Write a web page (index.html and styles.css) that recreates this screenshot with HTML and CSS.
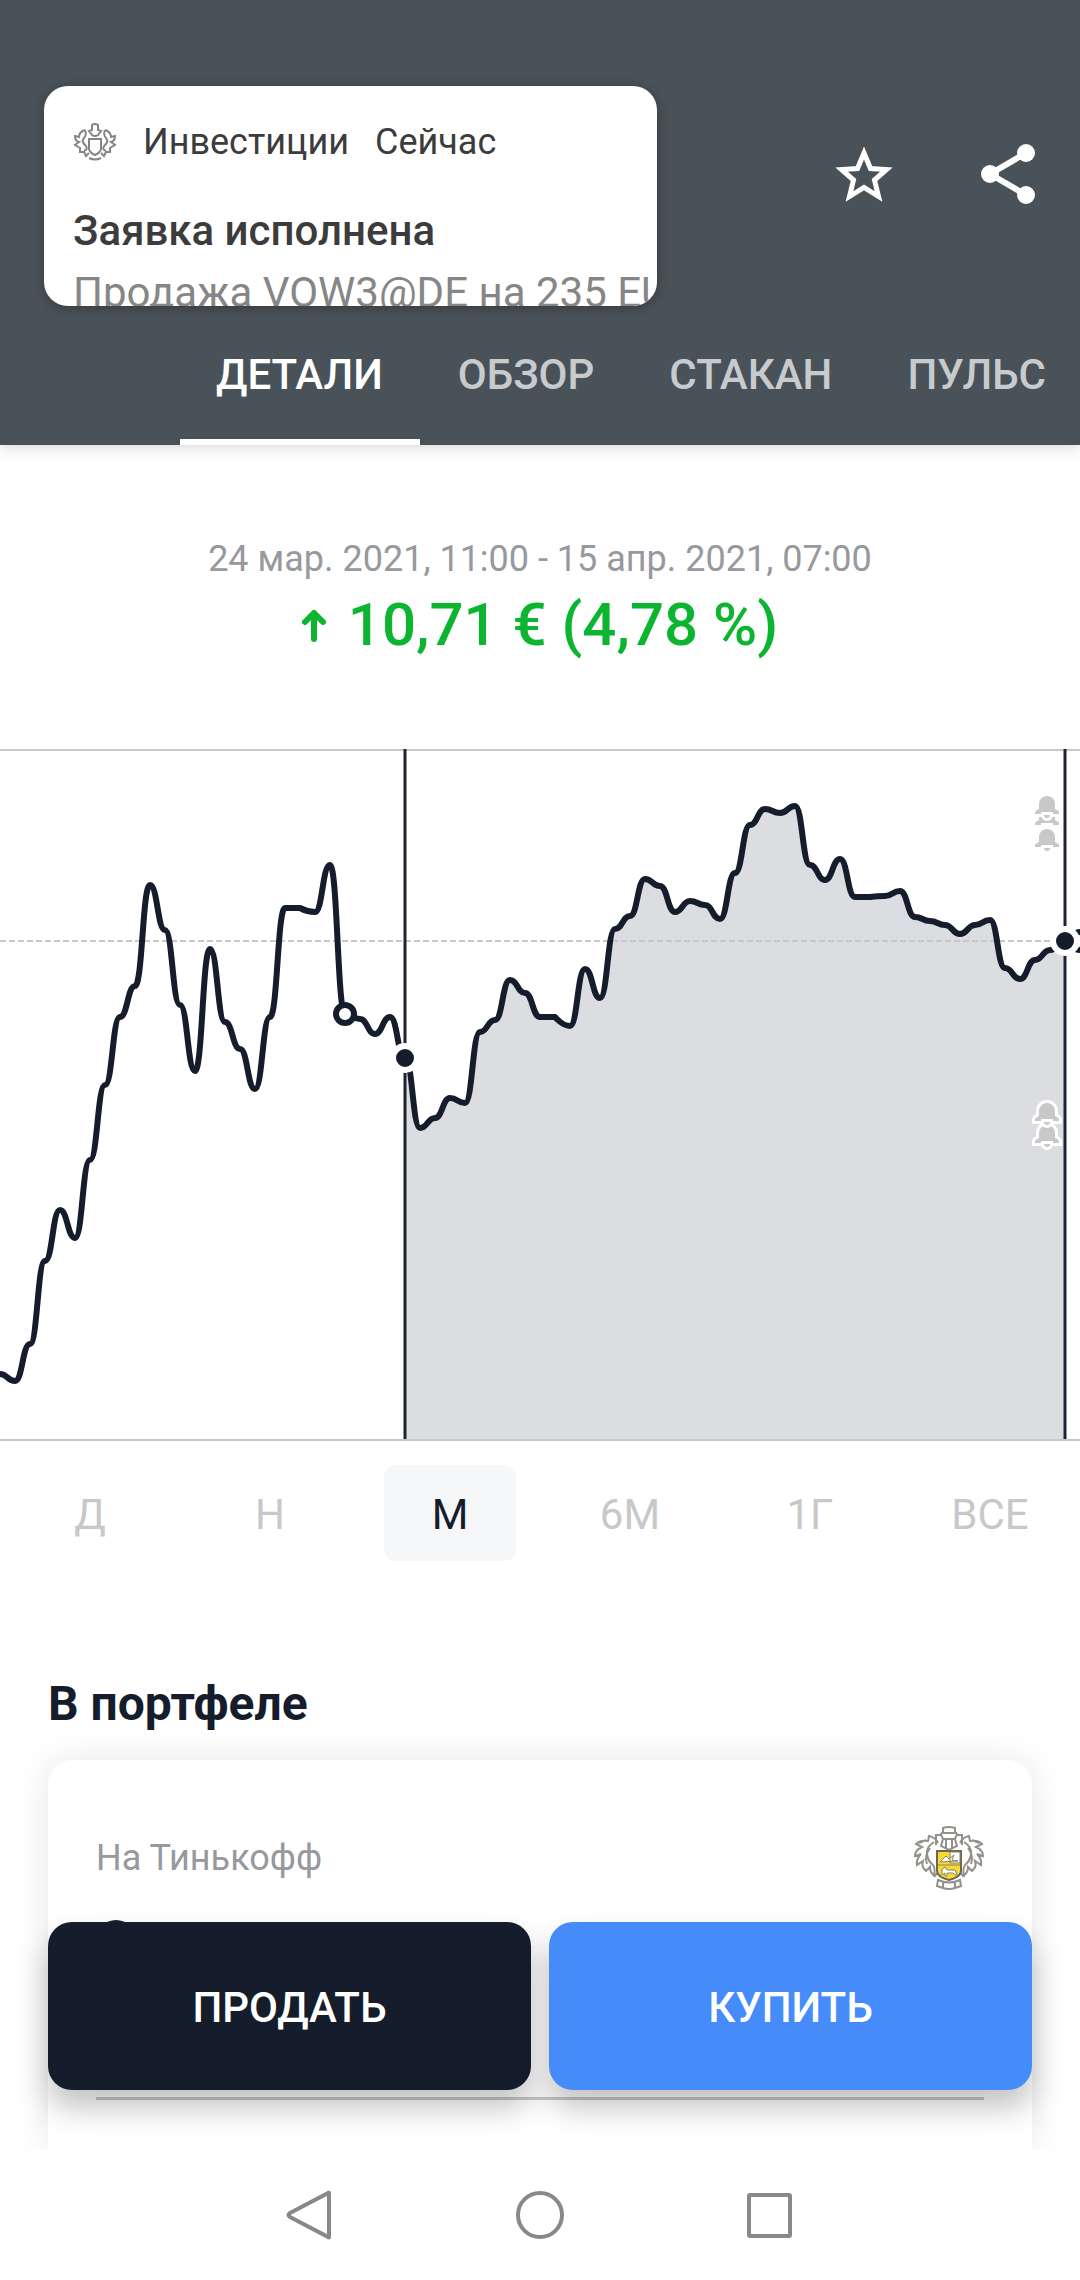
FILE: index.html
```html
<!DOCTYPE html>
<html lang="ru">
<head>
<meta charset="utf-8">
<meta name="viewport" content="width=device-width, initial-scale=1">
<title>Инвестиции</title>
<link rel="stylesheet" href="styles.css">
</head>
<body>
<div class="screen">
  <header class="header">
    <div class="header-top">
      <section class="toast">
        <div class="toast-app">
          <svg class="toast-icon" viewBox="0 0 44 38" aria-hidden="true">
            <path d="M19 2q3-2 6 0v5l3 1-3 4q-3 2-6 0l-3-4 3-1zM16 16h12v10q-1 4-6 6q-5-2-6-6zM12 7q-6 2-6 7l-4-1q0 5 4 6l-4 3 5 3v4l4 0 2 4 3-3M12 7q2 5-1 8t1 7-1 6M32 7q6 2 6 7l4-1q0 5-4 6l4 3-5 3v4l-4 0-2 4-3-3M32 7q-2 5 1 8t-1 7 1 6M16 35q6 3 12 0"/>
          </svg>
          <span>Инвестиции</span>
          <span>Сейчас</span>
        </div>
        <h2 class="toast-title">Заявка исполнена</h2>
        <p class="toast-text">Продажа VOW3@DE на 235 EUR</p>
      </section>
      <div class="header-actions">
        <button class="icon-button" type="button" aria-label="В избранное">
          <svg viewBox="0 0 72 72"><path d="M36 15 42.500 30.500 58.500 31.500 46.500 42 50.500 58.500 36 49.500 21.500 58.500 25.500 42 13.500 31.500 29.500 30.500z" fill="none" stroke="#fff" stroke-width="5"/></svg>
        </button>
        <button class="icon-button" type="button" aria-label="Поделиться">
          <svg viewBox="0 0 72 72"><path d="M54 15 18 36 54 57" fill="none" stroke="#fff" stroke-width="6"/><g fill="#fff"><circle cx="54" cy="15" r="9"/><circle cx="18" cy="36" r="9"/><circle cx="54" cy="57" r="9"/></g></svg>
        </button>
      </div>
    </div>
    <nav class="tabs">
      <a class="tab tab-active" href="#details">ДЕТАЛИ</a>
      <a class="tab" href="#overview">ОБЗОР</a>
      <a class="tab" href="#orderbook">СТАКАН</a>
      <a class="tab" href="#pulse">ПУЛЬС</a>
    </nav>
  </header>

  <main class="content" id="details">
    <section class="summary">
      <p class="summary-range">24 мар. 2021, 11:00 - 15 апр. 2021, 07:00</p>
      <p class="summary-change">
        <svg class="arrow" viewBox="0 0 24 34" aria-hidden="true"><path d="M12 31V5M3 14l9-9 9 9"/></svg>
        <span>10,71 € (4,78 %)</span>
      </p>
    </section>

    <svg class="chart" viewBox="0 749 1080 692" role="img" aria-label="График цены за месяц">
      <defs>
        <g id="bell">
          <path d="M-12 0v-2q0-1 4-3v-5a8 8 0 0 1 16 0v5q4 2 4 3v2z"/>
          <path d="M-3 1a3 3 0 0 0 6 0z"/>
        </g>
      </defs>
      <path class="chart-area" d="M405 1058S412.500 1128 420 1128S427.500 1118 435 1118S442.500 1098 450 1098S457.500 1103 465 1103S472.500 1032 480 1032S487.500 1020 495 1020S502.500 980 510 980S517.500 993 525 993S532.500 1017 540 1017H555S562.500 1026 570 1026S577.500 969 585 969S592.500 998 600 998S607.500 929 615 929S622.500 916 630 916S637.500 879 645 879S652.500 886 660 886S667.500 912 675 912S682.500 901 690 901S697.500 905 705 905S712.500 919 720 919S727.500 873 735 873S742.500 825 750 825S757.500 809 765 809S772.500 813 780 813S787.500 806 795 806S802.500 865 810 865S817.500 880 825 880S832.500 859 840 859S847.500 897 855 897H870S877.500 896 885 896S892.500 891 900 891S907.500 917 915 917S922.500 921 930 921S937.500 925 945 925S952.500 934 960 934S967.500 925 975 925S982.500 920 990 920S997.500 968 1005 968S1012.500 979 1020 979S1027.500 960 1035 960S1042.500 950 1050 950S1057.500 941 1065 941V1440H405z"/>
      <path class="chart-frame" d="M0 750H1080"/>
      <path class="chart-last" d="M0 941H1050"/>
      <path class="chart-cursor" d="M405 749V1440M1065 749V1440"/>
      <path class="chart-line" d="M0 1374C7.500 1374 7.500 1381 15 1381S22.500 1344 30 1344S37.500 1261 45 1261S52.500 1210 60 1210S67.500 1238 75 1238S82.500 1160 90 1160S97.500 1085 105 1085S112.500 1017 120 1017S127.500 986 135 986S142.500 885 150 885S157.500 930 165 930S172.500 1005 180 1005S187.500 1071 195 1071S202.500 949 210 949S217.500 1022 225 1022S232.500 1049 240 1049S247.500 1089 255 1089S262.500 1017 270 1017S277.500 908 285 908H300S307.500 912 315 912S322.500 865 330 865S337.500 1014 345 1014S352.500 1019 360 1019S367.500 1034 375 1034S382.500 1017 390 1017S397.500 1058 405 1058S412.500 1128 420 1128S427.500 1118 435 1118S442.500 1098 450 1098S457.500 1103 465 1103S472.500 1032 480 1032S487.500 1020 495 1020S502.500 980 510 980S517.500 993 525 993S532.500 1017 540 1017H555S562.500 1026 570 1026S577.500 969 585 969S592.500 998 600 998S607.500 929 615 929S622.500 916 630 916S637.500 879 645 879S652.500 886 660 886S667.500 912 675 912S682.500 901 690 901S697.500 905 705 905S712.500 919 720 919S727.500 873 735 873S742.500 825 750 825S757.500 809 765 809S772.500 813 780 813S787.500 806 795 806S802.500 865 810 865S817.500 880 825 880S832.500 859 840 859S847.500 897 855 897H870S877.500 896 885 896S892.500 891 900 891S907.500 917 915 917S922.500 921 930 921S937.500 925 945 925S952.500 934 960 934S967.500 925 975 925S982.500 920 990 920S997.500 968 1005 968S1012.500 979 1020 979S1027.500 960 1035 960S1042.500 950 1050 950S1057.500 941 1065 941"/>
      <circle class="chart-ring" cx="345" cy="1014" r="9"/>
      <circle class="chart-ring" cx="1080" cy="941" r="9"/>
      <circle class="chart-dot" cx="405" cy="1058" r="12"/>
      <circle class="chart-dot" cx="1065" cy="941" r="12"/>
      <g class="chart-bells">
        <use href="#bell" x="1047" y="825"/>
        <use href="#bell" x="1047" y="847"/>
        <use href="#bell" x="1047" y="814"/>
        <use href="#bell" x="1047" y="1143"/>
        <use href="#bell" x="1047" y="1121"/>
      </g>
      <path class="chart-frame" d="M0 1440H1080"/>
    </svg>

    <div class="periods">
      <button class="period" type="button">Д</button>
      <button class="period" type="button">Н</button>
      <button class="period period-active" type="button">М</button>
      <button class="period" type="button">6М</button>
      <button class="period" type="button">1Г</button>
      <button class="period" type="button">ВСЕ</button>
    </div>

    <section class="portfolio">
      <h1 class="portfolio-title">В портфеле</h1>
      <div class="card">
        <div class="card-row">
          <span>На Тинькофф</span>
          <svg class="crest" viewBox="0 0 70 64" aria-hidden="true">
            <path class="crest-line" d="M29 2q6-2 12 0v4l2 2-2 5 2 7-8 4-8-4 2-7-2-5 2-2zM29 7h12M29 13h12M32 14v9M38 14v9M27 9h-5v10M43 9h5v10"/>
            <path class="crest-line" d="M24 17q-3-6-9-7l-1 5q-8-1-12 3l6 3q-7 3-7 9l6-2q-5 5-4 11l6-4q-2 6 3 10l4-4q0 6 5 9l4-5M20 16q-8 5-7 12t5 10 2 13M16 22q-6 8-3 16M5 17l7-3"/>
            <path class="crest-line" d="M46 17q3-6 9-7l1 5q8-1 12 3l-6 3q7 3 7 9l-6-2q5 5 4 11l-6-4q2 6-3 10l-4-4q0 6-5 9l-4-5M50 16q8 5 7 12t-5 10-2 13M54 22q6 8 3 16M65 17l-7-3"/>
            <path class="crest-line" d="M24 54l-1 6 6 2q6 2 12 0l6-2-1-6q-11 5-22 0zM29 57v5M41 57v5"/>
            <path class="crest-shield" d="M23 25h24v20q0 6-12 9q-12-3-12-9z"/>
            <path class="crest-detail" d="M36 37V26h10v11zM26 36l6-6 3 3 5-4-2 5 6 1zM28 49v-6l3-2 2 3h8l2 5h-2l-2-2h-6v3h-2v-3zM24 39h22"/>
          </svg>
        </div>
        <div class="card-position">
          <svg class="position-icon" viewBox="0 0 72 72" aria-hidden="true"><circle cx="36" cy="36" r="36"/></svg>
        </div>
      </div>
      <div class="actions">
        <button class="action action-sell" type="button">ПРОДАТЬ</button>
        <button class="action action-buy" type="button">КУПИТЬ</button>
      </div>
    </section>
  </main>

  <nav class="system-bar" aria-label="Система">
    <button class="system-button" type="button" aria-label="Назад"><svg viewBox="0 0 54 54"><path d="M46 5v44q0 1-1 0L7 29q-3-2 0-4L45 5q1-1 1 0z"/></svg></button>
    <button class="system-button" type="button" aria-label="Домой"><svg viewBox="0 0 54 54"><circle cx="27" cy="27" r="22"/></svg></button>
    <button class="system-button" type="button" aria-label="Недавние"><svg viewBox="0 0 54 54"><rect x="6" y="7" width="41" height="41" rx="1"/></svg></button>
  </nav>
</div>
</body>
</html>
```
FILE: styles.css
```css
* {
  box-sizing: border-box;
}

body {
  margin: 0;
  background: #fff;
  color: #151d2c;
  font-family: Roboto, "Noto Sans", sans-serif;
}

h1, h2, p {
  margin: 0;
}

button {
  margin: 0;
  padding: 0;
  border: 0;
  background: none;
  font: inherit;
  cursor: pointer;
}

svg {
  display: block;
}

.screen {
  display: flex;
  flex-direction: column;
  min-height: 100vh;
  overflow: hidden;
}

/* Header */
.header {
  position: relative;
  padding-top: 86px;
  background: #4a5259;
  box-shadow: 0 2px 14px rgba(40, 50, 60, 0.2);
}

.header-top {
  display: flex;
  justify-content: space-between;
  padding: 0 36px 0 44px;
}

.toast {
  width: 613px;
  height: 220px;
  padding: 34px 7px 0 29px;
  overflow: hidden;
  border-radius: 24px;
  background: #fff;
  box-shadow: 0 2px 12px rgba(0, 0, 0, 0.3);
}

.toast-app {
  display: flex;
  align-items: center;
  gap: 26px;
  color: #3c3c3c;
  font-size: 36px;
  line-height: 44px;
}

.toast-icon {
  width: 44px;
  height: 38px;
  fill: none;
  stroke: #858585;
  stroke-width: 2;
}

.toast-title {
  margin-top: 43px;
  color: #3c3c3c;
  font-size: 42px;
  font-weight: 500;
  line-height: 48px;
}

.toast-text {
  margin-top: 14px;
  overflow: hidden;
  color: #868686;
  font-size: 42px;
  line-height: 48px;
  white-space: nowrap;
}

.header-actions {
  display: flex;
  gap: 72px;
  padding-top: 52px;
}

.icon-button,
.icon-button svg {
  width: 72px;
  height: 72px;
}

.tabs {
  display: flex;
  gap: 2px;
  padding-left: 180px;
}

.tab {
  flex: none;
  height: 139px;
  padding: 44px 37px 0 36px;
  border-bottom: 6px solid transparent;
  color: #c7cbce;
  font-size: 42px;
  font-weight: 500;
  line-height: 50px;
  text-decoration: none;
}

.tab-active {
  border-bottom-color: #fff;
  color: #fff;
}

/* Summary and chart */
.content {
  display: flex;
  flex: 1;
  flex-direction: column;
}

.summary {
  padding: 92px 0 88px;
  text-align: center;
}

.summary-range {
  color: #96999e;
  font-size: 36px;
  line-height: 44px;
}

.summary-change {
  display: flex;
  align-items: center;
  justify-content: center;
  gap: 22px;
  margin-top: 8px;
  color: #0cb52f;
  font-size: 60px;
  font-weight: 500;
  line-height: 72px;
}

.arrow {
  width: 24px;
  height: 34px;
  fill: none;
  stroke: currentColor;
  stroke-linecap: round;
  stroke-linejoin: round;
  stroke-width: 6;
}

.chart {
  width: 100%;
  height: auto;
}

.chart-area {
  fill: #dcdde1;
}

.chart-frame,
.chart-last,
.chart-cursor,
.chart-line {
  fill: none;
  stroke-width: 2;
}

.chart-frame {
  stroke: #c8c8c8;
}

.chart-last {
  stroke: #c8c8c8;
  stroke-dasharray: 6 3;
}

.chart-cursor {
  stroke: #1e242d;
  stroke-width: 3;
}

.chart-line {
  stroke: #151d2c;
  stroke-linejoin: round;
  stroke-width: 6;
}

.chart-ring {
  fill: #fff;
  stroke: #151d2c;
  stroke-width: 6;
}

.chart-dot {
  fill: #151d2c;
  stroke: #fff;
  stroke-width: 6;
}

.chart-bells {
  fill: #c8c8c8;
  paint-order: stroke;
  stroke: #fff;
  stroke-width: 6;
}

/* Period switch */
.periods {
  display: grid;
  grid-template-columns: repeat(6, 1fr);
  justify-items: center;
  padding-top: 24px;
}

.period {
  width: 132px;
  height: 96px;
  padding-top: 2px;
  border-radius: 12px;
  color: #c8c8c8;
  font-size: 42px;
}

.period-active {
  background: #f5f7f9;
  color: #151d2c;
}

/* Portfolio */
.portfolio {
  position: relative;
  display: flex;
  flex: 1;
  flex-direction: column;
  padding: 115px 48px 0;
  overflow: hidden;
}

.portfolio-title {
  font-size: 48px;
  font-weight: 700;
  line-height: 56px;
}

.card {
  flex: 1;
  min-height: 389px;
  margin-top: 28px;
  padding: 62px 48px 0;
  border-radius: 24px 24px 0 0;
  background: #fff;
  box-shadow: 0 0 36px rgba(0, 0, 0, 0.1);
}

.card-row {
  display: flex;
  align-items: center;
  justify-content: space-between;
  height: 72px;
  color: #96999e;
  font-size: 36px;
}

.crest {
  width: 70px;
  height: 64px;
}

.crest-line {
  fill: none;
  stroke: #94908c;
  stroke-width: 2;
}

.crest-shield {
  fill: #f5d935;
  stroke: #6e6650;
  stroke-width: 2;
}

.crest-detail {
  fill: #fff;
  stroke: #8d8262;
  stroke-width: 1;
}

.card-position {
  height: 206px;
  padding-top: 26px;
  border-bottom: 3px solid #c8c8c8;
}

.position-icon {
  width: 40px;
  height: 40px;
  fill: #151d2c;
}

.actions {
  position: absolute;
  right: 48px;
  bottom: 60px;
  left: 48px;
  display: grid;
  grid-template-columns: 1fr 1fr;
  gap: 18px;
}

.action {
  height: 168px;
  padding-top: 2px;
  border-radius: 24px;
  box-shadow: 0 18px 30px rgba(0, 0, 0, 0.24);
  color: #fff;
  font-size: 42px;
  font-weight: 500;
}

.action-sell {
  background: #151d2c;
}

.action-buy {
  background: #458bfa;
}

/* System navigation */
.system-bar {
  display: flex;
  justify-content: center;
  gap: 176px;
  height: 130px;
  padding-top: 38px;
  background: #fff;
}

.system-button,
.system-button svg {
  width: 54px;
  height: 54px;
}

.system-button svg {
  fill: none;
  stroke: #888;
  stroke-width: 4;
}
```
